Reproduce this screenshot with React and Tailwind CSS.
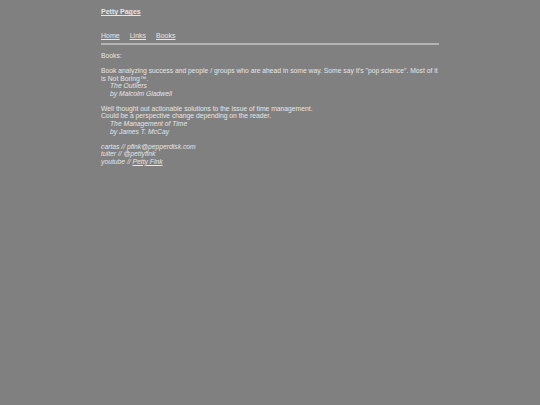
import React from 'react';

const books = [
  {
    blurb: ['Book analyzing success and people / groups who are ahead in some way. Some say it\'s "pop science". Most of it is Not Boring™.'],
    title: 'The Outliers',
    author: 'by Malcolm Gladwell',
  },
  {
    blurb: [
      'Well thought out actionable solutions to the issue of time management.',
      'Could be a perspective change depending on the reader.',
    ],
    title: 'The Management of Time',
    author: 'by James T. McCay',
  },
];

export default function App() {
  return (
    <div
      className="min-h-screen bg-[#808080] text-[#e6e6e6] text-[6.75px] leading-[7.55px]"
      style={{ fontFamily: '"Liberation Sans", Arial, sans-serif' }}
    >
      <div className="w-[338px] mx-auto pt-[8px]">
        <h1 className="font-bold underline text-[7px]">Petty Pages</h1>

        <nav className="mt-[16px] flex gap-[10px] pb-[4px] border-b-2 border-[#b4b4b4] text-[7px]">
          <a className="underline" href="#">Home</a>
          <a className="underline" href="#">Links</a>
          <a className="underline" href="#">Books</a>
        </nav>

        <div className="mt-[7px]">
          <p>Books:</p>

          {books.map((b) => (
            <div key={b.title} className="mt-[7.55px]">
              {b.blurb.map((line) => (
                <p key={line}>{line}</p>
              ))}
              <div className="pl-[9px] italic">
                <p>{b.title}</p>
                <p>{b.author}</p>
              </div>
            </div>
          ))}

          <div className="mt-[7.55px] italic">
            <p>cartas // pfink@pepperdisk.com</p>
            <p>tuiter // @pettyfink</p>
            <p>
              youtube // <a className="underline" href="#">Petty Fink</a>
            </p>
          </div>
        </div>
      </div>
    </div>
  );
}
